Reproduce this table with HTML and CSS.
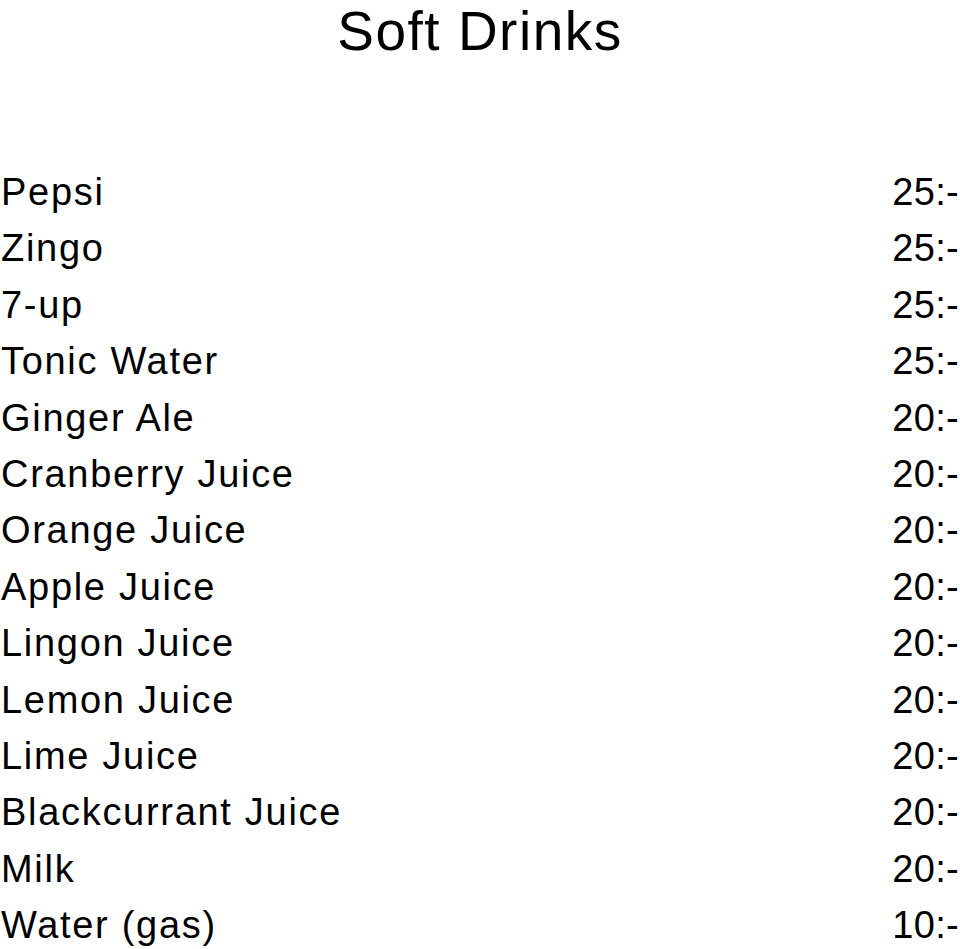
FILE: index.html
```html
<!DOCTYPE html>
<html lang="en">
<head>
<meta charset="utf-8">
<title>Soft Drinks</title>
<link rel="stylesheet" href="styles.css">
</head>
<body>
<h1 class="title">Soft Drinks</h1>
<ul class="menu">
  <li class="item"><span class="name">Pepsi</span><span class="price">25:-</span></li>
  <li class="item"><span class="name">Zingo</span><span class="price">25:-</span></li>
  <li class="item"><span class="name">7-up</span><span class="price">25:-</span></li>
  <li class="item"><span class="name">Tonic Water</span><span class="price">25:-</span></li>
  <li class="item"><span class="name">Ginger Ale</span><span class="price">20:-</span></li>
  <li class="item"><span class="name">Cranberry Juice</span><span class="price">20:-</span></li>
  <li class="item"><span class="name">Orange Juice</span><span class="price">20:-</span></li>
  <li class="item"><span class="name">Apple Juice</span><span class="price">20:-</span></li>
  <li class="item"><span class="name">Lingon Juice</span><span class="price">20:-</span></li>
  <li class="item"><span class="name">Lemon Juice</span><span class="price">20:-</span></li>
  <li class="item"><span class="name">Lime Juice</span><span class="price">20:-</span></li>
  <li class="item"><span class="name">Blackcurrant Juice</span><span class="price">20:-</span></li>
  <li class="item"><span class="name">Milk</span><span class="price">20:-</span></li>
  <li class="item"><span class="name">Water (gas)</span><span class="price">10:-</span></li>
</ul>
</body>
</html>
```
FILE: styles.css
```css
html, body {
  margin: 0;
  padding: 0;
  background: #ffffff;
  color: #000000;
  font-family: "Liberation Sans", Arial, sans-serif;
}

.title {
  margin: 0;
  font-size: 55px;
  line-height: 62px;
  font-weight: normal;
  letter-spacing: 1.5px;
  text-align: center;
}

.menu {
  list-style: none;
  margin: 102px 0 0 0;
  padding: 0 1px 0 1px;
}

.item {
  display: flex;
  justify-content: space-between;
  font-size: 38px;
  line-height: 56.4px;
  letter-spacing: 1.7px;
}

.price {
  letter-spacing: 0.3px;
}
```
